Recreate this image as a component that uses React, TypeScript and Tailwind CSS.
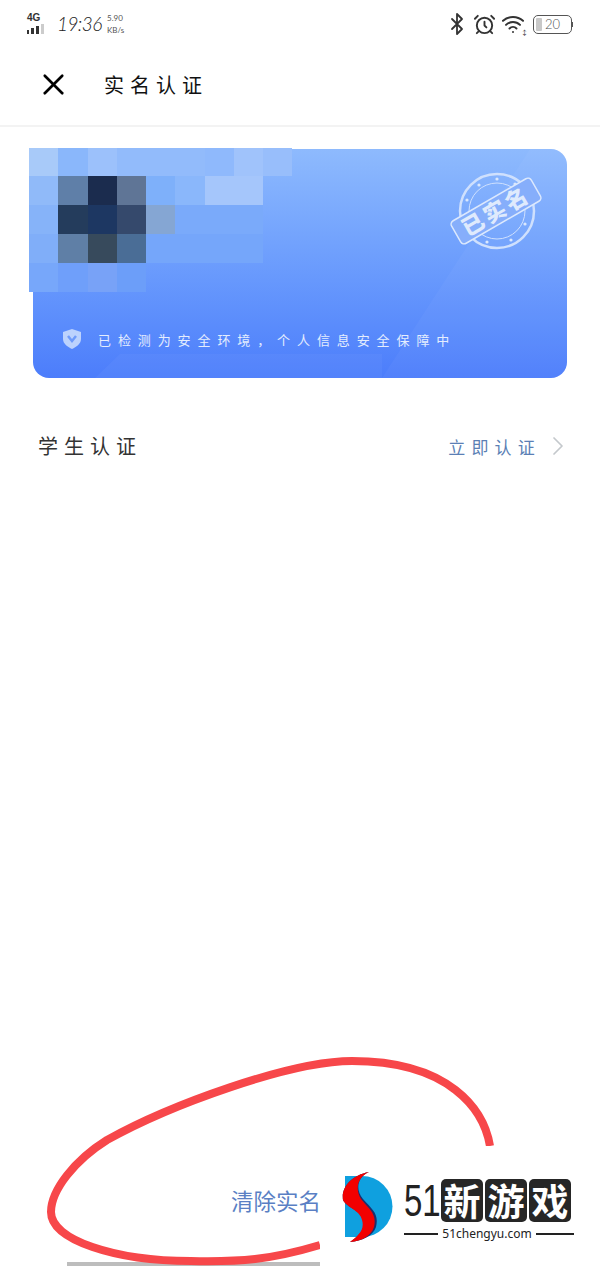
import { AlarmClock, Bluetooth, ChevronRight, Wifi, X } from 'lucide-react'

const cjk = { fontFamily: '"Noto Sans CJK SC", sans-serif' }

// blurred name / id area laid over the card
const mosaic = [
  ['#a8caf9', '#8ab7fb', '#9cc1fb', '#92bbfb', '#92bbfb', '#92bbfb', '#8fb9fc', '#a0c3fb', '#98befb'],
  ['#90baf9', '#5f7fa8', '#1b2c4e', '#5f7596', '#7eb0fa', '#8ab7fb', '#a5c6fb', '#a5c6fb', 'transparent'],
  ['#86b3f9', '#243c5c', '#1d3762', '#35496c', '#85a6d3', '#7aaafa', '#7aaafa', '#7aaafa', 'transparent'],
  ['#80aef9', '#5f7fa6', '#374a5c', '#4a6d96', '#75a6fa', '#75a6fa', '#75a6fa', '#75a6fa', 'transparent'],
  ['#77a7fa', '#6f9ffa', '#78a2f7', '#6c9ef9', 'transparent', 'transparent', 'transparent', 'transparent', 'transparent'],
]

function StatusBar() {
  return (
    <div className="flex h-[50px] shrink-0 items-start justify-between pl-[27px] pr-[27px] pt-[12px] text-[#333]">
      <div className="flex items-start">
        <div className="flex w-[20px] flex-col">
          <span className="text-[10px] leading-[11px] font-bold" style={{ fontFamily: '"Liberation Sans", sans-serif' }}>4G</span>
          <div className="mt-[1px] flex items-end gap-[2px]">
            <span className="h-[4px] w-[2px] bg-[#333]" />
            <span className="h-[6px] w-[3px] bg-[#333]" />
            <span className="h-[8px] w-[3px] bg-[#333]" />
            <span className="h-[10px] w-[3px] bg-[#ccc]" />
          </div>
        </div>
        <span className="ml-[10px] mt-[1px] w-[44px] text-[19px] leading-[22px] tracking-[-0.6px] font-light text-[#222] italic" style={{ fontFamily: 'Lato, sans-serif' }}>19:36</span>
        <div className="ml-[6px] flex flex-col text-[8px] leading-[12px] text-[#555]" style={{ fontFamily: 'Lato, sans-serif' }}>
          <span>5.90</span>
          <span>KB/s</span>
        </div>
      </div>
      <div className="flex items-center">
        <Bluetooth className="h-[24px] w-[24px] -mx-[2px]" strokeWidth={1.8} />
        <AlarmClock className="ml-[6px] h-[23px] w-[23px]" strokeWidth={2} />
        <div className="relative ml-[5px] h-[24px] w-[27px]">
          <Wifi className="h-[24px] w-[24px]" strokeWidth={2} />
          <span className="absolute bottom-[2px] right-0 text-[7px] leading-[4px] text-[#333]">↕</span>
        </div>
        <div className="ml-[5px] flex items-center">
          <div className="flex h-[19px] w-[39px] items-center rounded-[5px] border border-[#555] px-[2px]">
            <span className="h-[13px] w-[6px] rounded-[1px] bg-[#c8c8c8]" />
            <span className="ml-[3px] text-[13px] leading-none font-light text-[#555]" style={{ fontFamily: 'Lato, sans-serif' }}>20</span>
          </div>
          <span className="h-[5px] w-[1px] bg-[#555]" />
        </div>
      </div>
    </div>
  )
}

function Stamp() {
  return (
    <svg viewBox="0 0 100 90" className="absolute left-[412px] top-[17px] h-[90px] w-[100px]">
      <circle cx="52" cy="45" r="37" fill="none" stroke="#cfe0fd" strokeWidth="2.5" />
      <circle cx="52" cy="45" r="28" fill="none" stroke="#cfe0fd" strokeWidth="1" />
      {[[52, 13], [70, 18], [82, 36], [80, 58], [66, 74], [42, 76], [24, 60], [22, 34], [34, 19]].map(([x, y]) => (
        <circle key={x} cx={x} cy={y} r="1.6" fill="#dbe8fd" />
      ))}
      <g transform="rotate(-30 51 45)">
        <rect x="5" y="32" width="92" height="26" rx="4" fill="#86aefb" stroke="#dbe8fd" strokeWidth="1.5" />
        <text x="51" y="53" textAnchor="middle" fontSize="22" fontWeight="900" fill="#dfeafd" letterSpacing="3" style={cjk}>已实名</text>
      </g>
    </svg>
  )
}

function Card() {
  return (
    <div className="relative mx-[33px] mt-[22px] h-[229px] shrink-0 overflow-hidden rounded-[16px] bg-gradient-to-b from-[#8ebafd] to-[#4c7dfb]">
      <svg viewBox="0 0 534 229" className="absolute inset-0 h-full w-full">
        <polygon points="349,229 497,0 534,0 534,229" fill="#ffffff" fillOpacity="0.035" />
        <polygon points="62,229 87,205 349,205 349,229" fill="#ffffff" fillOpacity="0.04" />
      </svg>
      <Stamp />
      <div className="absolute bottom-[29px] left-[30px] flex items-center">
        <svg viewBox="0 0 18 20" className="h-[20px] w-[18px]">
          <path d="M9 0 L18 3 V10 C18 15 13 18 9 20 C5 18 0 15 0 10 V3 Z" fill="#bcd2fd" />
          <path d="M5 7 L9 12 L13 7" fill="none" stroke="#6f9bfa" strokeWidth="2.5" />
        </svg>
        <span className="ml-[17px] whitespace-nowrap text-[13px] leading-none tracking-[6.9px] text-[#e4edfe]" style={cjk}>
          已检测为安全环境，个人信息安全保障中
        </span>
      </div>
    </div>
  )
}

function Logo() {
  return (
    <div className="absolute bottom-0 right-0 flex h-[120px] w-[280px] bg-white pl-[22px] pt-[26px]">
      <svg viewBox="0 0 54 72" className="h-[72px] w-[54px] shrink-0">
        <path d="M3 4 H20 A30.5 30.5 0 0 1 20 65 H3 Z" fill="#0fa0df" />
        <path d="M27 0 C17 4 12 16 21 27 C31 38 37 42 34 55 C31 64 20 69 8 70 C16 64 24 58 21 48 C19 38 5 36 1 28 C-1 15 10 3 27 0 Z" fill="#1b2f6e" />
        <path d="M27 0 C17 4 12 16 19 27 C28 38 35 42 32 55 C29 64 20 69 8 70 C16 64 23 58 20 48 C18 38 5 36 1 28 C-1 15 10 3 27 0 Z" fill="#f20000" />
      </svg>
      <div className="ml-[8px] flex w-[170px] flex-col">
        <div className="flex h-[44px] items-start pt-[7px]">
          <span className="w-[37px] origin-left scale-x-75 text-[44px] leading-[44px] text-[#222]" style={{ fontFamily: '"Liberation Sans", sans-serif' }}>51</span>
          <div className="flex gap-[2px]">
            {['新', '游', '戏'].map((c) => (
              <span key={c} className="flex h-[43px] w-[42px] items-center justify-center rounded-[5px] bg-[#262626] text-[37px] leading-none font-bold text-white" style={cjk}>
                {c}
              </span>
            ))}
          </div>
        </div>
        <div className="mt-[12px] flex items-center justify-between">
          <span className="h-[2px] w-[34px] bg-[#222]" />
          <span className="text-[12px] leading-none text-[#222]" style={{ fontFamily: '"Noto Sans", sans-serif' }}>51chengyu.com</span>
          <span className="h-[2px] w-[38px] bg-[#222]" />
        </div>
      </div>
    </div>
  )
}

export default function App() {
  return (
    <div className="relative flex h-[1266px] w-[600px] flex-col overflow-hidden bg-white" style={cjk}>
      <StatusBar />

      {/* Header */}
      <div className="flex h-[77px] shrink-0 items-center border-b-2 border-[#f3f3f3] pb-[6px] pl-[36px]">
        <X className="h-[35px] w-[35px] text-black" strokeWidth={1.8} />
        <span className="ml-[33px] text-[20px] leading-none tracking-[6px] text-[#111]">实名认证</span>
      </div>

      <Card />

      {/* Student row */}
      <div className="mt-[56px] flex h-[24px] shrink-0 items-center justify-between pl-[38px] pr-[30px]">
        <span className="text-[20px] leading-none tracking-[6px] text-[#333]">学生认证</span>
        <div className="flex items-center">
          <span className="text-[17px] leading-none tracking-[6.2px] text-[#5b7fb5]">立即认证</span>
          <ChevronRight className="ml-[1px] h-[32px] w-[32px] -mr-[4px] text-[#c4c8cc]" strokeWidth={1.3} />
        </div>
      </div>

      <div className="flex-1" />

      {/* Clear button */}
      <div className="flex h-[34px] shrink-0 items-center pl-[231px]">
        <span className="text-[22.5px] leading-none text-[#5a7fc4]">清除实名</span>
      </div>
      <div className="mt-[45px] mx-[67px] h-[4px] shrink-0 bg-[#bdbdbd]" />

      {/* mosaic over the card */}
      <div className="absolute left-[29px] top-[148px] grid grid-cols-[repeat(9,29.25px)] grid-rows-[28px_29px_29px_29px_29px]">
        {mosaic.flat().map((c, i) => (
          <span key={i} style={{ backgroundColor: c }} />
        ))}
      </div>

      {/* hand drawn circle */}
      <svg viewBox="0 0 600 1266" className="absolute inset-0 h-full w-full" fill="none">
        <path
          d="M490 1146 C484 1110 450 1061 352 1061 C290 1061 170 1105 107 1140 C75 1160 51 1190 51 1212 C51 1240 115 1261 191 1261 C240 1262 270 1260 320 1245"
          stroke="#f7474a"
          strokeWidth="8"
        />
      </svg>

      <Logo />
    </div>
  )
}
